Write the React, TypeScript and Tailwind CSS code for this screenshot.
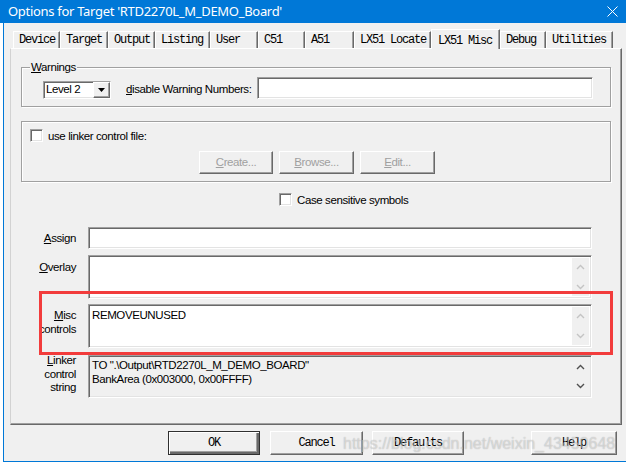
import React from "react";

const sunken =
  "border border-t-[#a0a0a0] border-l-[#a0a0a0] border-b-white border-r-white shadow-[inset_1px_1px_0_#696969,inset_-1px_-1px_0_#e3e3e3]";
const raised =
  "border border-t-white border-l-white border-b-[#696969] border-r-[#696969] shadow-[inset_-1px_-1px_0_#a0a0a0]";
const mono = "font-['Liberation_Mono',monospace] text-[12px] tracking-[-1.2px]";

function Chevron({ up, color }: { up?: boolean; color: string }) {
  return (
    <svg width="9" height="6" viewBox="0 0 9 6">
      <polyline
        points={up ? "1,5 4.5,1.5 8,5" : "1,1 4.5,4.5 8,1"}
        fill="none"
        stroke={color}
        strokeWidth="1.4"
      />
    </svg>
  );
}

function ScrollCol({ color, py }: { color: string; py: string }) {
  return (
    <div className={`w-[17px] self-stretch bg-[#f0f0f0] flex flex-col items-center justify-between ${py}`}>
      <Chevron up color={color} />
      <Chevron color={color} />
    </div>
  );
}

function Checkbox() {
  return <div className={`w-[13px] h-[13px] bg-white ${sunken}`} />;
}

function Btn({ children, w, ml }: { children: React.ReactNode; w: string; ml: string }) {
  return (
    <div className={`${w} ${ml} h-[23px] ${raised} flex items-center justify-center text-[#a0a0a0]`}>
      {children}
    </div>
  );
}

function DlgBtn({ label, w, ml, def }: { label: string; w: string; ml: string; def?: boolean }) {
  return (
    <div
      className={`${w} ${ml} h-[24px] flex items-center justify-center ${mono} ${
        def
          ? "border border-[#303030] shadow-[inset_1px_1px_0_#fff,inset_-2px_-2px_0_#696969,inset_-3px_-3px_0_#a0a0a0]"
          : raised
      }`}
    >
      {label}
    </div>
  );
}

const tabs: [string, number][] = [
  ["Device", 47],
  ["Target", 48],
  ["Output", 47],
  ["Listing", 55],
  ["User", 48],
  ["C51", 47],
  ["A51", 49],
  ["LX51 Locate", 77],
  ["LX51 Misc", 69],
  ["Debug", 46],
  ["Utilities", 67],
];

export default function App() {
  return (
    <div className="w-[626px] h-[465px] bg-white flex flex-col overflow-hidden relative font-['Liberation_Sans',Arial,sans-serif] text-[11.5px] tracking-[-0.4px] text-black">
      {/* Title bar */}
      <div className="h-[23px] bg-[#0078d7] flex items-center justify-between pl-[8px] pr-[8px] shrink-0">
        <span className="font-['Noto_Sans',sans-serif] text-[13px] tracking-[-0.3px] text-white leading-none">
          Options for Target 'RTD2270L_M_DEMO_Board'
        </span>
        <svg width="11" height="11" viewBox="0 0 11 11">
          <path d="M0.5 0.5 L10.5 10.5 M10.5 0.5 L0.5 10.5" stroke="#fff" strokeWidth="1" />
        </svg>
      </div>

      <div className="flex flex-row">
        {/* background window strip */}
        <div className="w-[3px] h-[439px] bg-white" />
        {/* dialog */}
        <div className="flex-1 h-[439px] border-l border-b border-[#0078d7] bg-[#f0f0f0] flex flex-col pt-[6px]">
          {/* tabs */}
          <div className="flex items-end h-[19px] ml-[9px] relative z-10">
            {tabs.map(([t, w]) => {
              const sel = t === "LX51 Misc";
              return (
                <div
                  key={t}
                  style={{ width: w }}
                  className={`${mono} border-l border-t border-l-white border-t-white border-r border-r-[#696969] shadow-[inset_-1px_0_0_#a0a0a0] bg-[#f0f0f0] pl-[5px] flex ${
                    sel ? "h-[20px] mb-[-1px] items-start pt-[2px] pl-[6px]" : "h-[17px] items-center"
                  } whitespace-nowrap`}
                >
                  {t}
                </div>
              );
            })}
          </div>

          {/* tab panel */}
          <div className="ml-[6px] w-[612px] h-[377px] border-t border-t-white border-l border-l-[#d2d2d2] border-r border-r-[#696969] border-b border-b-[#696969] shadow-[inset_-1px_-1px_0_#a0a0a0] flex flex-col relative">
            {/* Warnings group */}
            <div className="relative mt-[18px] ml-[10px] w-[590px] h-[40px] border border-[#a0a0a0] shadow-[inset_1px_1px_0_#fff,1px_1px_0_#fff] flex items-end pl-[21px] pt-[9px] pb-[7px]">
              <span className="absolute left-[8px] top-[-8px] bg-[#f0f0f0] px-[1px] leading-[14px]">
                <span className="underline">W</span>arnings
              </span>
              <div className={`w-[68px] h-[18px] bg-white ${sunken} flex items-stretch`}>
                <span className="flex-1 pl-[2px] leading-[15px]">Level 2</span>
                <div className={`w-[17px] bg-[#f0f0f0] ${raised} flex items-center justify-center`}>
                  <svg width="7" height="4" viewBox="0 0 7 4">
                    <polygon points="0,0 7,0 3.5,4" fill="#000" />
                  </svg>
                </div>
              </div>
              <span className="ml-[15px] self-center leading-[14px] mt-[1px]">
                <span className="underline">d</span>isable Warning Numbers:
              </span>
              <div className={`ml-auto mr-[17px] w-[336px] h-[22px] bg-white ${sunken}`} />
            </div>

            {/* Linker control file group */}
            <div className="mt-[14px] ml-[10px] w-[590px] h-[61px] border border-[#a0a0a0] shadow-[inset_1px_1px_0_#fff,1px_1px_0_#fff] flex flex-col pt-[7px]">
              <div className="flex items-center h-[13px] pl-[8px]">
                <Checkbox />
                <span className="ml-[5px] leading-[14px]">use linker control file:</span>
              </div>
              <div className="flex mt-[9px] ml-[177px]">
                <Btn w="w-[74px]" ml="ml-0">
                  <span className="underline">C</span>reate...
                </Btn>
                <Btn w="w-[75px]" ml="ml-[6px]">
                  <span className="underline">B</span>rowse...
                </Btn>
                <Btn w="w-[75px]" ml="ml-[6px]">
                  <span className="underline">E</span>dit...
                </Btn>
              </div>
            </div>

            {/* Case sensitive */}
            <div className="flex items-center h-[13px] mt-[11px] ml-[268px]">
              <Checkbox />
              <span className="ml-[5px] leading-[14px]">Case sensitive symbols</span>
            </div>

            {/* Assign */}
            <div className="flex items-center mt-[21px] h-[22px]">
              <span className="w-[65px] text-right leading-[14px]">
                <span className="underline">A</span>ssign
              </span>
              <div className={`ml-[12px] w-[504px] h-[22px] bg-white ${sunken}`} />
            </div>

            {/* Overlay */}
            <div className="flex mt-[6px] h-[44px]">
              <span className="w-[65px] text-right leading-[14px] pt-[5px]">
                <span className="underline">O</span>verlay
              </span>
              <div className={`ml-[12px] w-[504px] h-[44px] bg-white ${sunken} flex justify-end p-[2px]`}>
                <ScrollCol color="#c4c4c4" py="py-[6px]" />
              </div>
            </div>

            {/* Misc controls */}
            <div className="flex mt-[5px] h-[44px]">
              <span className="w-[65px] text-right leading-[14px] pt-[4px]">
                <span className="underline">M</span>isc
                <br />
                controls
              </span>
              <div className={`ml-[12px] w-[504px] h-[44px] bg-white ${sunken} flex p-[2px]`}>
                <span className="flex-1 pl-[1px] pt-[1px] leading-[14px]">REMOVEUNUSED</span>
                <ScrollCol color="#c4c4c4" py="py-[6px]" />
              </div>
            </div>

            {/* Linker control string */}
            <div className="flex mt-[7px] h-[43px]">
              <span className="w-[65px] text-right leading-[13.5px] mt-[-1px]">
                <span className="underline">L</span>inker
                <br />
                control
                <br />
                string
              </span>
              <div className={`ml-[12px] w-[504px] h-[43px] bg-[#f0f0f0] ${sunken} flex p-[2px]`}>
                <span className="flex-1 pl-[1px] leading-[14px] whitespace-pre">
                  {'TO ".\\Output\\RTD2270L_M_DEMO_BOARD"\nBankArea (0x003000, 0x00FFFF)'}
                </span>
                <ScrollCol color="#505050" py="py-[6px]" />
              </div>
            </div>

            {/* red annotation rectangle */}
            <div className="absolute left-[28px] top-[242px] w-[574px] h-[64px] border-[3px] border-[#f23c3c] pointer-events-none" />
          </div>

          {/* bottom buttons */}
          <div className="flex mt-[6px]">
            <DlgBtn label="OK" w="w-[92px]" ml="ml-[164px]" def />
            <DlgBtn label="Cancel" w="w-[93px]" ml="ml-[10px]" />
            <DlgBtn label="Defaults" w="w-[92px]" ml="ml-[9px]" />
            <DlgBtn label="Help" w="w-[86px]" ml="ml-[67px]" />
          </div>
        </div>
      </div>

      {/* watermark */}
      <div className="absolute left-[343px] top-[435px] text-[16px] tracking-normal leading-[18px] text-[rgba(255,255,255,0.45)] [text-shadow:0_0_1px_rgba(0,0,0,0.3)] whitespace-nowrap pointer-events-none">
        https://blog.csdn.net/weixin_43450648
      </div>
    </div>
  );
}
